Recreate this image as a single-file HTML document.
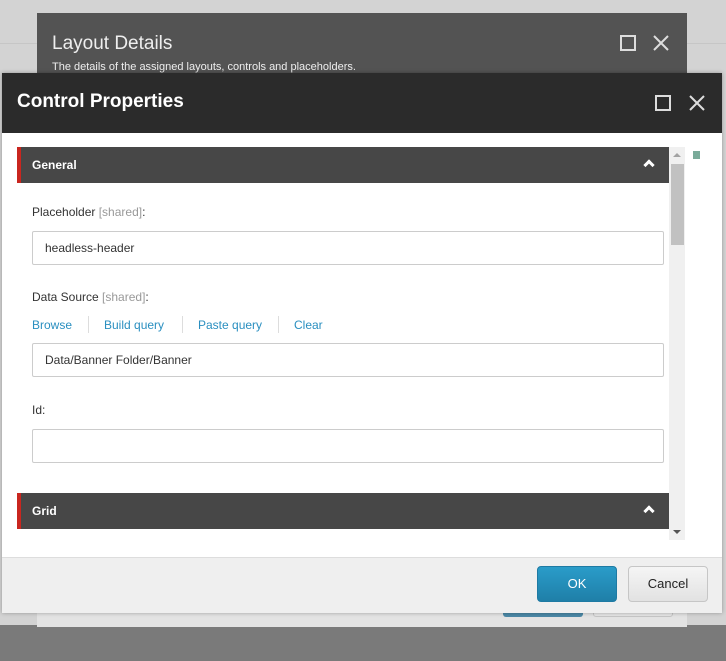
<!DOCTYPE html>
<html><head><meta charset="utf-8"><style>
*{margin:0;padding:0;box-sizing:border-box}
body{width:726px;height:661px;position:relative;overflow:hidden;background:#d3d3d3;font-family:"Liberation Sans",sans-serif}
.abs{position:absolute}
.lbl{position:absolute;left:32px;font-size:12px;color:#333}
.lbl span{color:#999}
.inp{position:absolute;left:32px;width:632px;height:34px;border:1px solid #ccc;border-radius:2px;background:#fff;font-size:12px;color:#333;padding:10px 12px;line-height:13px}
.bar{position:absolute;left:17px;width:652px;height:36px;background:#474747;border-left:4px solid #c9261f;color:#fff;font-weight:bold;font-size:12px;padding:11px 0 0 11px}
.chev{position:absolute;right:16px;top:14px;width:8px;height:8px;border-left:3px solid #fff;border-top:3px solid #fff;transform:rotate(45deg)}
.lnk{position:absolute;top:318px;font-size:12px;color:#2a8fc0}
.sep{position:absolute;top:316px;width:1px;height:17px;background:#ddd}
</style></head><body>
<div class="abs" style="left:0;top:43px;width:726px;height:1px;background:#c6c6c6"></div>
<div class="abs" style="left:0;top:625px;width:726px;height:36px;background:#7a7a7a"></div>
<div class="abs" style="left:37px;top:13px;width:650px;height:614px;background:#e3e3e3"></div>
<div class="abs" style="left:37px;top:13px;width:650px;height:70px;background:#535353"></div>
<div class="abs" style="left:52px;top:33px;font-size:19px;color:#eee">Layout Details</div>
<div class="abs" style="left:52px;top:61px;font-size:11px;color:#eee">The details of the assigned layouts, controls and placeholders.</div>
<div class="abs" style="left:620px;top:35px;width:16px;height:16px;border:2px solid #ddd"></div>
<svg class="abs" style="left:652px;top:34px" width="18" height="18"><path d="M2 2L16 16M16 2L2 16" stroke="#ddd" stroke-width="2"/></svg>
<div class="abs" style="left:503px;top:600px;width:80px;height:17px;background:#4b88a6;border-radius:3px"></div>
<div class="abs" style="left:593px;top:600px;width:80px;height:17px;background:#e6e6e6;border:1px solid #c6c6c6;border-radius:3px"></div>

<div class="abs" style="left:2px;top:73px;width:720px;height:540px;background:#fff;box-shadow:0 0 4px rgba(0,0,0,.3)"></div>
<div class="abs" style="left:2px;top:73px;width:720px;height:60px;background:#2b2b2b"></div>
<div class="abs" style="left:17px;top:91px;font-size:19px;color:#fff;font-weight:bold">Control Properties</div>
<div class="abs" style="left:655px;top:95px;width:16px;height:16px;border:2px solid #ddd"></div>
<svg class="abs" style="left:688px;top:94px" width="18" height="18"><path d="M2 2L16 16M16 2L2 16" stroke="#ddd" stroke-width="2"/></svg>

<div class="bar" style="top:147px">General<div class="chev"></div></div>
<div class="lbl" style="top:205px">Placeholder <span>[shared]</span>:</div>
<div class="inp" style="top:231px">headless-header</div>
<div class="lbl" style="top:290px">Data Source <span>[shared]</span>:</div>
<div class="lnk" style="left:32px">Browse</div>
<div class="sep" style="left:88px"></div>
<div class="lnk" style="left:104px">Build query</div>
<div class="sep" style="left:182px"></div>
<div class="lnk" style="left:198px">Paste query</div>
<div class="sep" style="left:278px"></div>
<div class="lnk" style="left:294px">Clear</div>
<div class="inp" style="top:343px">Data/Banner Folder/Banner</div>
<div class="lbl" style="top:403px">Id:</div>
<div class="inp" style="top:429px"></div>
<div class="bar" style="top:493px">Grid<div class="chev"></div></div>

<div class="abs" style="left:669px;top:147px;width:16px;height:393px;background:#f0f0f0"></div>
<div class="abs" style="left:671px;top:164px;width:13px;height:81px;background:#c1c1c1"></div>
<div class="abs" style="left:673px;top:153px;width:0;height:0;border:4px solid transparent;border-bottom:4px solid #a3a3a3;border-top:0"></div>
<div class="abs" style="left:673px;top:530px;width:0;height:0;border:4px solid transparent;border-top:4px solid #555;border-bottom:0"></div>
<div class="abs" style="left:693px;top:151px;width:7px;height:8px;background:#7aab9a"></div>

<div class="abs" style="left:2px;top:557px;width:720px;height:56px;background:#efefef;border-top:1px solid #ddd"></div>
<div class="abs" style="left:537px;top:566px;width:80px;height:36px;background:linear-gradient(#2a9cc9,#1f7fa8);border-radius:4px;border:1px solid #1e7aa3;color:#fff;font-size:13px;text-align:center;line-height:34px">OK</div>
<div class="abs" style="left:628px;top:566px;width:80px;height:36px;background:linear-gradient(#f5f5f5,#e2e2e2);border-radius:4px;border:1px solid #c6c6c6;color:#222;font-size:13px;text-align:center;line-height:34px">Cancel</div>
</body></html>
